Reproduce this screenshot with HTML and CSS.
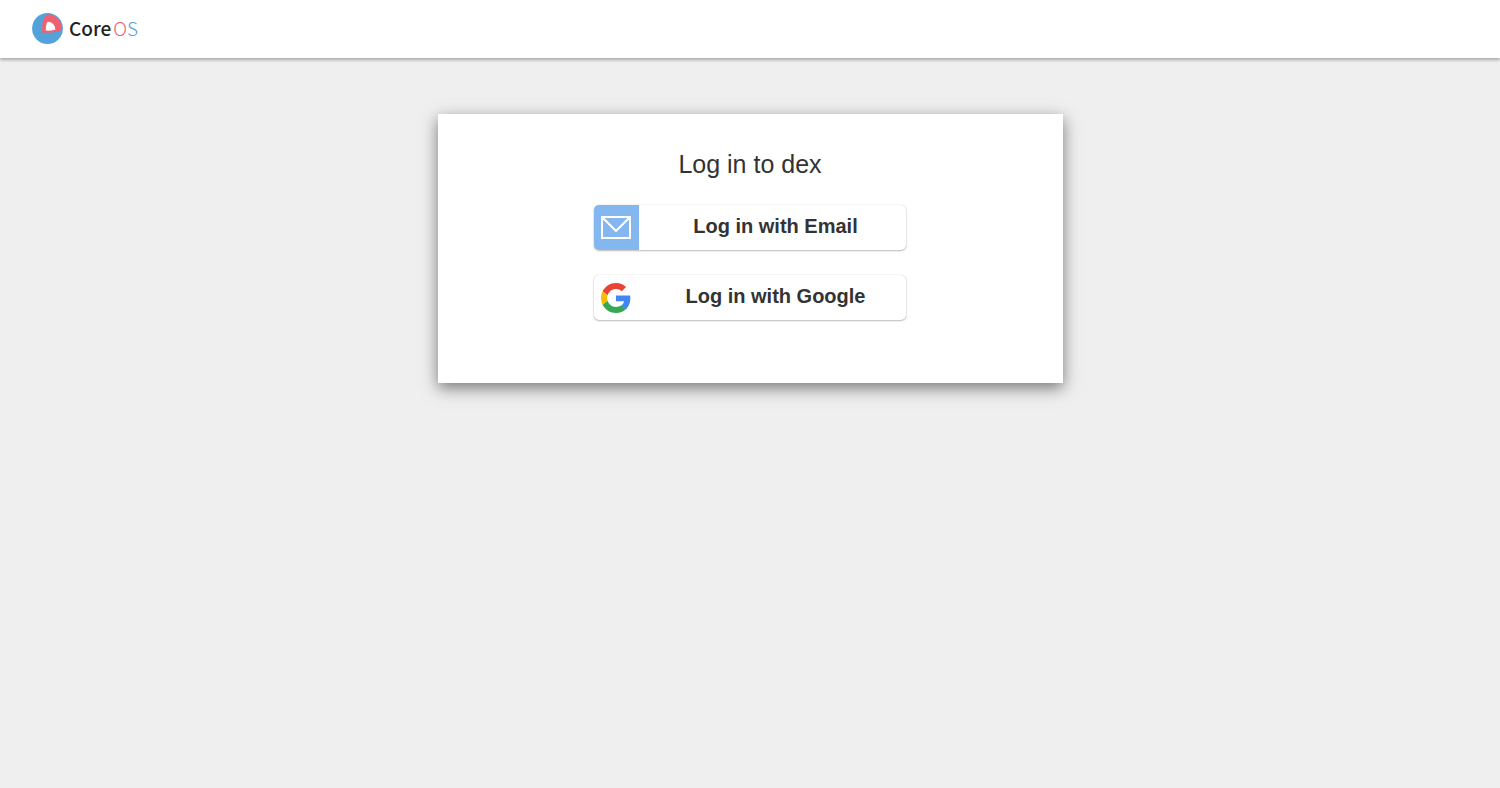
FILE: index.html
```html
<!DOCTYPE html>
<html lang="en">
<head>
<meta charset="utf-8">
<meta name="viewport" content="width=device-width, initial-scale=1">
<title>dex</title>
<link rel="stylesheet" href="styles.css">
</head>
<body>
<header class="navbar">
  <div class="logo">
    <svg class="logo-mark" viewBox="0 0 31 31" aria-hidden="true">
      <circle cx="15.500" cy="15.500" r="15.400" fill="#53a3da"/>
      <path d="M15.500 1.300C11.500 3.200 9.700 10 10.200 19.500C13 19.900 16 19.900 20 19.500C24.500 19.100 28 18.200 30 16.800C30.400 8.500 24 1.300 15.500 1.300Z" fill="#f06070"/>
      <path d="M15.700 8.700C14.200 10.800 13.600 14 13.800 17.600C17 17.800 20 17.500 23.400 16.500C23 12 20 8.700 15.700 8.700Z" fill="#fff"/>
    </svg>
    <span class="logo-text"><span class="logo-core">Core</span><span class="logo-o">O</span><span class="logo-s">S</span></span>
  </div>
</header>
<main class="container">
  <section class="panel">
    <h1 class="heading">Log in to dex</h1>
    <div class="providers">
      <button class="provider" type="button">
        <span class="provider-icon provider-icon-email">
          <svg class="icon" viewBox="0 0 30 24" aria-hidden="true" fill="none" stroke="#fff" stroke-width="2"><path d="M1 1H29V22H1ZM1.500 1.500L15 15L28.500 1.500"/></svg>
        </span>
        <span class="provider-text">Log in with Email</span>
      </button>
      <button class="provider" type="button">
        <span class="provider-icon">
          <svg class="icon" viewBox="0 0 48 48" aria-hidden="true">
            <path fill="#EA4335" d="M24 9.500c3.540 0 6.710 1.220 9.210 3.600l6.850-6.850C35.900 2.380 30.470 0 24 0 14.620 0 6.510 5.380 2.560 13.220l7.980 6.190C12.430 13.720 17.740 9.500 24 9.500z"/>
            <path fill="#4285F4" d="M46.980 24.550c0-1.570-.15-3.090-.38-4.550H24v9.020h12.940c-.58 2.960-2.260 5.480-4.780 7.180l7.730 6c4.510-4.180 7.090-10.360 7.090-17.650z"/>
            <path fill="#FBBC05" d="M10.530 28.590c-.48-1.450-.76-2.990-.76-4.590s.27-3.140.76-4.590l-7.980-6.190C.92 16.460 0 20.120 0 24s.92 7.540 2.560 10.780l7.970-6.190z"/>
            <path fill="#34A853" d="M24 48c6.480 0 11.930-2.130 15.890-5.810l-7.730-6c-2.150 1.450-4.920 2.300-8.160 2.300-6.260 0-11.570-4.220-13.470-9.910l-7.980 6.190C6.510 42.620 14.620 48 24 48z"/>
          </svg>
        </span>
        <span class="provider-text">Log in with Google</span>
      </button>
    </div>
  </section>
</main>
</body>
</html>
```
FILE: styles.css
```css
* { box-sizing: border-box; }

body {
  margin: 0;
  min-height: 100vh;
  background: #efefef;
  color: #333;
  font-family: "Liberation Sans", Arial, sans-serif;
}

.navbar {
  display: flex;
  align-items: center;
  height: 58px;
  padding: 0 32px 2px;
  background: #fff;
  box-shadow: 0 2px 3px rgba(0, 0, 0, 0.3);
}

.logo {
  display: flex;
  align-items: center;
  gap: 6px;
}

.logo-mark {
  display: block;
  width: 31px;
  height: 31px;
}

.logo-text {
  display: flex;
  font-family: "Noto Sans CJK SC", "Open Sans", sans-serif;
  font-size: 19px;
  line-height: 28px;
}

.logo-core {
  margin-right: 2px;
  color: #222;
  font-weight: 500;
}

.logo-o,
.logo-s { font-weight: 300; }

.logo-o { color: #f06070; }
.logo-s { color: #53a3da; }

.container {
  display: flex;
  justify-content: center;
  padding: 56px 20px;
}

.panel {
  width: 100%;
  max-width: 625px;
  padding: 35px 30px 63px;
  background: #fff;
  box-shadow: 0 5px 15px rgba(0, 0, 0, 0.5);
}

.heading {
  margin: 0 0 26px;
  font-size: 25px;
  font-weight: 400;
  line-height: 30px;
  text-align: center;
}

.providers {
  display: flex;
  flex-direction: column;
  align-items: center;
  gap: 25px;
}

.provider {
  display: flex;
  width: 100%;
  max-width: 312px;
  height: 45px;
  padding: 0;
  overflow: hidden;
  border: 0;
  border-radius: 5px;
  background: #fff;
  box-shadow: 0 1px 2px rgba(0, 0, 0, 0.25), 0 0 1px rgba(0, 0, 0, 0.25);
  color: #333;
  font-family: inherit;
  font-size: 20px;
  font-weight: 700;
  line-height: 43px;
  cursor: pointer;
}

.provider-icon {
  display: flex;
  flex: none;
  align-items: center;
  width: 45px;
  height: 45px;
  padding-left: 7px;
}

.provider-icon-email { background: #84b6ef; }

.icon {
  display: block;
  width: 30px;
}

.provider-text {
  flex: 1;
  padding-left: 6px;
  text-align: center;
}
```
